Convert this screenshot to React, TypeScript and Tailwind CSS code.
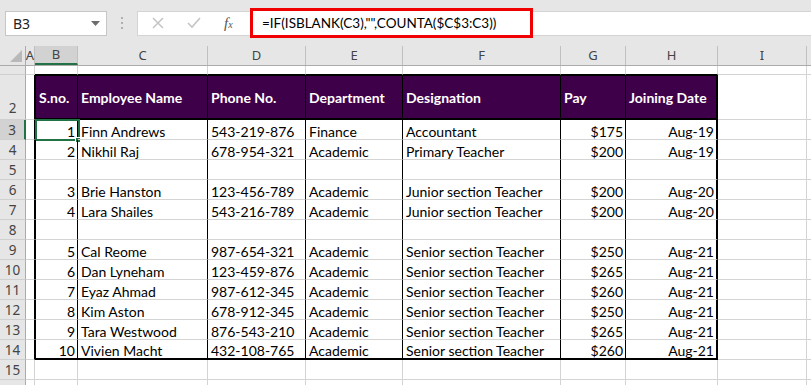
import React from "react";

const COL_W = ["w-[9px]", "w-[43px]", "w-[130px]", "w-[98px]", "w-[97px]", "w-[158px]", "w-[65px]", "w-[92px]", "w-[89px]", "flex-1"];
const LETTERS = ["A", "B", "C", "D", "E", "F", "G", "H", "I", ""];
const ROW_H: Record<number, string> = { 1: "h-[9px]", 2: "h-[45px]" };

const HEAD = ["S.no.", "Employee Name", "Phone No.", "Department", "Designation", "Pay", "Joining Date"];

const DATA: (string[] | null)[] = [
  ["1", "Finn Andrews", "543-219-876", "Finance", "Accountant", "$175", "Aug-19"],
  ["2", "Nikhil Raj", "678-954-321", "Academic", "Primary Teacher", "$200", "Aug-19"],
  null,
  ["3", "Brie Hanston", "123-456-789", "Academic", "Junior section Teacher", "$200", "Aug-20"],
  ["4", "Lara Shailes", "543-216-789", "Academic", "Junior section Teacher", "$200", "Aug-20"],
  null,
  ["5", "Cal Reome", "987-654-321", "Academic", "Senior section Teacher", "$250", "Aug-21"],
  ["6", "Dan Lyneham", "123-459-876", "Academic", "Senior section Teacher", "$265", "Aug-21"],
  ["7", "Eyaz Ahmad", "987-612-345", "Academic", "Senior section Teacher", "$260", "Aug-21"],
  ["8", "Kim Aston", "678-912-345", "Academic", "Senior section Teacher", "$250", "Aug-21"],
  ["9", "Tara Westwood", "876-543-210", "Academic", "Senior section Teacher", "$265", "Aug-21"],
  ["10", "Vivien Macht", "432-108-765", "Academic", "Senior section Teacher", "$260", "Aug-21"],
];

function cellText(r: number, c: number) {
  if (c < 1 || c > 7) return "";
  if (r === 2) return HEAD[c - 1];
  if (r >= 3 && r <= 14) {
    const row = DATA[r - 3];
    return row ? row[c - 1] : "";
  }
  return "";
}

function cellClass(r: number, c: number) {
  const inTable = r >= 2 && r <= 14 && c >= 1 && c <= 7;
  const right = c === 9 ? "" : inTable
    ? c === 7 ? "border-r-2 border-r-black" : "border-r border-r-black"
    : c === 0 && r >= 2 && r <= 14 ? "border-r border-r-black" : "border-r border-r-[#d4d4d4]";
  const bottom = inTable && (r === 2 || r === 14)
    ? "border-b-2 border-b-black"
    : r === 1 && c >= 1 && c <= 7 ? "border-b border-b-black" : "border-b border-b-[#d4d4d4]";
  const left = inTable && c === 1 ? "border-l border-l-black" : "";
  const top = inTable && r === 2 ? "border-t border-t-black" : "";
  const fill = inTable && r === 2 ? "bg-[#3f004a] text-white font-bold" : "text-black pt-[3px]";
  const align = r !== 2 && (c === 1 || c === 6 || c === 7) ? "justify-end pr-[2px]" : "pl-[3px]";
  return [right, bottom, left, top, fill, align].join(" ");
}

function RowHeader({ r }: { r: number }) {
  const sel = r === 3;
  return (
    <div
      className={`w-[26px] shrink-0 h-full flex justify-center text-[13.5px] text-[#444] font-['Noto_Sans'] border-b border-b-[#d0d0d0] ${
        r === 2 ? "items-end pb-[1px]" : "items-center pt-[1px]"
      } ${sel ? "bg-[#d2d2d2] border-r-2 border-r-[#217346]" : "bg-[#e6e6e6] border-r border-r-[#ababab]"}`}
    >
      {r === 1 || r === 16 ? "" : r}
    </div>
  );
}

function SheetRow({ r }: { r: number }) {
  return (
    <div className={`flex ${ROW_H[r] ?? "h-[20px]"} shrink-0`}>
      <RowHeader r={r} />
      {COL_W.map((w, c) => (
        <div
          key={c}
          className={`${w} shrink-0 h-full relative flex items-center whitespace-nowrap overflow-visible text-[14px] ${cellClass(r, c)}`}
        >
          {cellText(r, c)}
          {r === 3 && c === 1 && (
            <>
              <div className="absolute -left-[1px] -top-[1px] w-[45px] h-[22px] border-2 border-[#217346]" />
              <div className="absolute left-[39px] top-[17px] w-[6px] h-[6px] bg-[#217346] border border-white" />
            </>
          )}
        </div>
      ))}
    </div>
  );
}

function Toolbar() {
  return (
    <div className="h-[46px] shrink-0 bg-[#e6e6e6] flex items-center">
      <div className="ml-[5px] w-[102px] h-[25px] bg-white border border-[#c6c6c6] flex items-center justify-between pl-[7px] pr-[6px] text-[14px] text-[#222] font-['Noto_Sans']">
        B3
        <svg width="9" height="5" viewBox="0 0 9 5">
          <polygon points="0,0 9,0 4.5,5" fill="#6d6d6d" />
        </svg>
      </div>
      <div className="w-[30px] flex flex-col items-center gap-[3px]">
        <span className="w-[2px] h-[2px] bg-[#b0b0b0]" />
        <span className="w-[2px] h-[2px] bg-[#b0b0b0]" />
        <span className="w-[2px] h-[2px] bg-[#b0b0b0]" />
      </div>
      <div className="w-[113px] h-[25px] bg-white border border-[#d4d4d4] border-r-0 flex items-center">
        <svg className="ml-[14px]" width="12" height="12" viewBox="0 0 12 12">
          <path d="M1 1 L11 11 M11 1 L1 11" stroke="#c4c4c4" strokeWidth="1.5" />
        </svg>
        <svg className="ml-[23px]" width="14" height="12" viewBox="0 0 14 12">
          <path d="M1 6 L5 10 L13 1" stroke="#c4c4c4" strokeWidth="1.6" fill="none" />
        </svg>
        <span className="ml-[23px] italic text-[15px] text-[#555] font-['Liberation_Serif']">
          f<span className="text-[10px]">x</span>
        </span>
      </div>
      <div className="flex-1 flex items-center">
        <div className="w-[283px] h-[30px] border-[3px] border-[#f00000] bg-white flex items-center pl-[9px] text-[13.5px] text-black whitespace-nowrap">
          =IF(ISBLANK(C3),"",COUNTA($C$3:C3))
        </div>
        <div className="flex-1 h-[25px] bg-white border-y border-[#d4d4d4]" />
      </div>
    </div>
  );
}

function ColumnHeaders() {
  return (
    <div className="h-[20px] shrink-0 flex bg-[#e6e6e6] border-b border-b-[#ababab] font-['Noto_Sans'] text-[13px] text-[#444]">
      <div className="w-[26px] shrink-0 h-full border-r border-r-[#ababab] flex items-end justify-end pr-[3px] pb-[3px]">
        <svg width="12" height="12" viewBox="0 0 12 12">
          <polygon points="12,0 12,12 0,12" fill="#b9b9b9" />
        </svg>
      </div>
      {COL_W.map((w, c) => (
        <div
          key={c}
          className={`${w} shrink-0 h-full flex items-center justify-center ${c === 9 ? "" : "border-r border-r-[#c0c0c0]"} ${
            c === 1 ? "bg-[#d2d2d2] border-b-2 border-b-[#217346]" : ""
          }`}
        >
          {LETTERS[c]}
        </div>
      ))}
    </div>
  );
}

export default function App() {
  const rows = Array.from({ length: 16 }, (_, i) => i + 1);
  return (
    <div className="w-[811px] h-[385px] overflow-hidden bg-white flex flex-col font-['Lato',sans-serif]">
      <Toolbar />
      <ColumnHeaders />
      {rows.map((r) => (
        <SheetRow key={r} r={r} />
      ))}
    </div>
  );
}
